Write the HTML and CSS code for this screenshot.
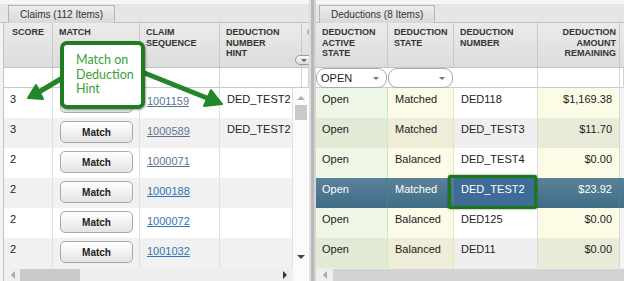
FILE: index.html
```html
<!DOCTYPE html>
<html lang="en">
<head>
  <meta charset="UTF-8" />
  <title>Claims and Deductions</title>
  <link rel="stylesheet" href="styles.css">
</head>
<body>

  <div class="screen">

    <section class="panel panel-claims">
      <div class="tabbar"><span class="tab">Claims (112 Items)</span></div>
      <div class="grid">
        <div class="head claims-cols">
          <div>Score</div>
          <div>Match</div>
          <div>Claim<br>Sequence</div>
          <div>Deduction<br>Number<br>Hint</div>
          <div class="cut">C</div>
          <span class="col-menu"><i class="tri-down"></i></span>
        </div>
        <div class="filter claims-cols">
          <div></div><div></div><div></div><div></div><div></div>
        </div>
        <div class="body">
          <div class="rows">
            <div class="row claims-row">
              <div>3</div>
              <div><button class="match-btn">Match</button></div>
              <div class="seq"><a class="visited">1001159</a></div>
              <div>DED_TEST2</div>
            </div>
            <div class="row claims-row alt">
              <div>3</div>
              <div><button class="match-btn">Match</button></div>
              <div class="seq"><a class="visited">1000589</a></div>
              <div>DED_TEST2</div>
            </div>
            <div class="row claims-row">
              <div>2</div>
              <div><button class="match-btn">Match</button></div>
              <div class="seq"><a class="visited">1000071</a></div>
              <div></div>
            </div>
            <div class="row claims-row alt">
              <div>2</div>
              <div><button class="match-btn">Match</button></div>
              <div class="seq"><a>1000188</a></div>
              <div></div>
            </div>
            <div class="row claims-row">
              <div>2</div>
              <div><button class="match-btn">Match</button></div>
              <div class="seq"><a>1000072</a></div>
              <div></div>
            </div>
            <div class="row claims-row alt">
              <div>2</div>
              <div><button class="match-btn">Match</button></div>
              <div class="seq"><a>1001032</a></div>
              <div></div>
            </div>
          </div>
          <div class="vscroll">
            <i class="tri-up"></i>
            <span class="vthumb"></span>
            <i class="tri-down dark"></i>
          </div>
        </div>
        <div class="hscroll">
          <div class="htrack">
            <i class="tri-left"></i>
            <span class="hthumb"></span>
            <i class="tri-right"></i>
          </div>
          <div class="corner"></div>
        </div>
      </div>
    </section>

    <div class="splitter"></div>

    <section class="panel panel-deductions">
      <div class="tabbar"><span class="tab">Deductions (8 Items)</span></div>
      <div class="grid">
        <div class="head ded-cols">
          <div>Deduction<br>Active<br>State</div>
          <div>Deduction<br>State</div>
          <div>Deduction<br>Number</div>
          <div class="num">Deduction<br>Amount<br>Remaining</div>
          <div></div>
        </div>
        <div class="filter ded-cols">
          <div class="combo-cell"><span class="combo">OPEN <i class="tri-down small"></i></span></div>
          <div class="combo-cell"><span class="combo"><i class="tri-down small"></i></span></div>
          <div></div><div></div><div></div>
        </div>
        <div class="body">
          <div class="rows wide">
            <div class="row ded-cols">
              <div>Open</div><div>Matched</div><div>DED118</div><div class="num">$1,169.38</div><div></div>
            </div>
            <div class="row ded-cols alt">
              <div>Open</div><div>Matched</div><div>DED_TEST3</div><div class="num">$11.70</div><div></div>
            </div>
            <div class="row ded-cols">
              <div>Open</div><div>Balanced</div><div>DED_TEST4</div><div class="num">$0.00</div><div></div>
            </div>
            <div class="row ded-cols sel">
              <div>Open</div><div>Matched</div><div class="hl">DED_TEST2</div><div class="num">$23.92</div><div></div>
            </div>
            <div class="row ded-cols">
              <div>Open</div><div>Balanced</div><div>DED125</div><div class="num">$0.00</div><div></div>
            </div>
            <div class="row ded-cols alt">
              <div>Open</div><div>Balanced</div><div>DED11</div><div class="num">$0.00</div><div></div>
            </div>
          </div>
        </div>
        <div class="hscroll">
          <div class="htrack full">
            <i class="tri-left"></i>
            <span class="hthumb long"></span>
          </div>
        </div>
      </div>
    </section>

    <!-- annotations drawn over the screenshot -->
    <svg class="arrows" width="624" height="281" viewBox="0 0 624 281">
      <g stroke="#22862a" stroke-width="5" stroke-linecap="round" stroke-linejoin="round" fill="#22862a">
        <line x1="64" y1="77" x2="39" y2="92" />
        <polygon points="28,98 36,85 43,99" stroke-width="2" />
        <line x1="142" y1="72" x2="207" y2="98" />
        <polygon points="222,104 211,90 204,106" stroke-width="2" />
      </g>
    </svg>
    <div class="callout">Match on<br>Deduction<br>Hint</div>
    <div class="hl-box"></div>

  </div>

</body>
</html>
```

FILE: styles.css
```css
* {
  box-sizing: border-box;
}

body {
  margin: 0;
  background-color: #f3f3f3;
  font-family: "Liberation Sans", Arial, sans-serif;
  color: #222;
}

.screen {
  position: relative;
  display: flex;
  width: 624px;
  height: 281px;
  overflow: hidden;
}

.panel {
  display: flex;
  flex-direction: column;
  overflow: hidden;
}

.panel-claims {
  width: 309px;
}

.panel-deductions {
  width: 308px;
}

.splitter {
  width: 7px;
  background: linear-gradient(to right, #dedede 0 2px, #b8b8b8 2px 5px, #d4d4d4 5px);
}

/* tabs */

.tabbar {
  height: 23px;
  padding: 4px 0 0 8px;
  background: linear-gradient(#f6f6f6 0 4px, #e6e6e6 4px);
  border-bottom: 1px solid #c2c2c2;
}

.panel-deductions .tabbar {
  padding-left: 3px;
}

.tab {
  display: inline-block;
  height: 19px;
  padding: 0 11px;
  line-height: 18px;
  font-size: 10px;
  color: #333;
  border: 1px solid #b3b3b3;
  border-bottom: none;
  background: linear-gradient(#ededed, #d7d7d7);
}

/* grids */

.grid {
  flex: 1;
  display: flex;
  flex-direction: column;
  background: #fff;
}

.panel-claims .grid {
  margin-left: 3px;
  border-left: 1px solid #c4c4c4;
}

.claims-cols {
  grid-template-columns: 49px 87px 80px 82px 1fr;
}

.claims-row {
  grid-template-columns: 49px 87px 80px 73px;
}

.ded-cols {
  grid-template-columns: 72px 66px 84px 82px 1fr;
}

.head {
  position: relative;
  display: grid;
  height: 45px;
  background: linear-gradient(#ebebeb, #dcdcdc);
  border-bottom: 1px solid #c4c4c4;
}

.head > div {
  padding: 4px 4px 0 6px;
  font-size: 9px;
  font-weight: bold;
  line-height: 10.5px;
  color: #333;
  text-transform: uppercase;
  border-right: 1px solid #c8c8c8;
}

.panel-claims .head > div:first-child {
  padding-left: 8px;
}

.head > div.num {
  text-align: right;
  padding-right: 3px;
}

.head > div.cut {
  padding-left: 5px;
  color: #999;
  white-space: nowrap;
  overflow: hidden;
}

.col-menu {
  position: absolute;
  left: 291px;
  top: 32px;
  width: 18px;
  height: 10px;
  border: 1px solid #9a9a9a;
  border-radius: 6px;
  background: linear-gradient(#fbfbfb, #d9d9d9);
  display: flex;
  align-items: center;
  justify-content: center;
}

.filter {
  display: grid;
  height: 20px;
  background: #fff;
  border-bottom: 1px solid #c9c9c9;
}

.filter > div {
  border-right: 1px solid #d4d4d4;
}

.filter > div.combo-cell {
  border-right: none;
  padding-right: 1px;
}

.combo {
  display: flex;
  align-items: center;
  justify-content: space-between;
  height: 20px;
  padding: 0 7px 0 4px;
  font-size: 11px;
  color: #222;
  border: 1px solid #aaa;
  border-radius: 9px;
  background: #fff;
}

.combo .tri-down {
  margin-left: auto;
}

.body {
  display: flex;
  height: 180px;
}

.rows {
  width: 289px;
}

.rows.wide {
  width: 100%;
}

.row {
  display: grid;
  height: 30px;
}

.row > div {
  padding: 4px 7px 0;
  font-size: 11px;
  line-height: 14px;
  border-right: 1px solid #e0e0e0;
  white-space: nowrap;
  overflow: hidden;
}

.row > div:first-child {
  padding-left: 6px;
}

.claims-row.alt {
  background: #f1f1f1;
}

.row > div.seq {
  padding-top: 6px;
}

.seq a {
  color: #2f74b5;
  text-decoration: underline;
}

.seq a.visited {
  color: #5a7592;
}

.match-btn {
  display: block;
  width: 73px;
  height: 22px;
  margin: -1px 0 0 0;
  padding: 0;
  font-family: "Liberation Sans", Arial, sans-serif;
  font-size: 10px;
  font-weight: bold;
  color: #222;
  border: 1px solid #a9a9a9;
  border-radius: 5px;
  background: linear-gradient(#ffffff, #e4e4e4);
}

/* deduction colours */

.ded-cols > div:nth-child(1) { background: #eef7e6; border-right-color: #d3e6b6; }
.ded-cols > div:nth-child(2) { background: #fcfbe7; border-right-color: #e9e6ad; }
.ded-cols > div:nth-child(3) { background: #ffffff; border-right-color: #dadada; }
.ded-cols > div:nth-child(4) { background: #fbfbe6; border-right-color: #d6d6d6; }
.ded-cols > div:nth-child(5) { background: #f4f4f4; }

.ded-cols.alt > div:nth-child(1) { background: #e2ead5; }
.ded-cols.alt > div:nth-child(2) { background: #efecd8; }
.ded-cols.alt > div:nth-child(3) { background: #efeff0; }
.ded-cols.alt > div:nth-child(4) { background: #e8ebd8; }

.head.ded-cols > div,
.filter.ded-cols > div {
  background: transparent;
}

.head.ded-cols > div {
  border-right-color: #c8c8c8;
}

.filter.ded-cols > div {
  border-right-color: #d4d4d4;
}

.row > div.num {
  text-align: right;
  padding-right: 7px;
}

.ded-cols.sel > div {
  background: linear-gradient(#5b8299, #406c87);
  color: #fff;
  border-right-color: #55798f;
}

.ded-cols.sel > div.hl {
  background: #3e6c97;
}

/* scrollbars */

.vscroll {
  display: flex;
  flex-direction: column;
  align-items: center;
  width: 16px;
  padding: 8px 0 9px;
  background: #fbfbfb;
}

.vthumb {
  width: 12px;
  height: 15px;
  margin-top: 5px;
  background: #c9c9c9;
}

.vscroll .tri-down {
  margin-top: auto;
}

.hscroll {
  display: flex;
  height: 13px;
  background: #efefef;
}

.htrack {
  display: flex;
  align-items: center;
  width: 289px;
}

.htrack.full {
  width: 100%;
}

.hthumb {
  width: 60px;
  height: 12px;
  margin-left: 5px;
  background: #c9c9c9;
}

.hthumb.long {
  flex: 1;
  width: auto;
  margin-left: 6px;
  background: #d2d2d2;
}

.htrack .tri-left {
  margin-left: 7px;
}

.htrack .tri-right {
  margin-left: auto;
  margin-right: 6px;
}

.corner {
  width: 16px;
  background: #fbfbfb;
}

.tri-up,
.tri-down,
.tri-left,
.tri-right {
  display: block;
  width: 0;
  height: 0;
}

.tri-up {
  border-left: 4px solid transparent;
  border-right: 4px solid transparent;
  border-bottom: 4px solid #b0b0b0;
}

.tri-down {
  border-left: 3px solid transparent;
  border-right: 3px solid transparent;
  border-top: 3px solid #666;
}

.tri-down.dark {
  border-left-width: 4px;
  border-right-width: 4px;
  border-top: 4px solid #444;
}

.tri-down.small {
  border-top-color: #777;
}

.tri-left {
  border-top: 4px solid transparent;
  border-bottom: 4px solid transparent;
  border-right: 4px solid #aaa;
}

.tri-right {
  border-top: 4px solid transparent;
  border-bottom: 4px solid transparent;
  border-left: 4px solid #333;
}

/* annotations */

.arrows {
  position: absolute;
  left: 0;
  top: 0;
  pointer-events: none;
}

.callout {
  position: absolute;
  left: 60px;
  top: 41px;
  width: 85px;
  height: 68px;
  padding: 8px 0 0 12px;
  font-family: Lato, "Liberation Sans", sans-serif;
  font-size: 12.5px;
  line-height: 14.5px;
  color: #36a136;
  background: #fff;
  border: 4px solid #1f7c1f;
  border-radius: 7px;
  box-shadow: 1px 1px 2px rgba(0,0,0,0.35);
}

.hl-box {
  position: absolute;
  left: 448px;
  top: 175px;
  width: 89px;
  height: 34px;
  border: 3px solid #177a17;
  border-radius: 2px;
  box-shadow: 0 0 2px rgba(0,0,0,0.6);
}
```
